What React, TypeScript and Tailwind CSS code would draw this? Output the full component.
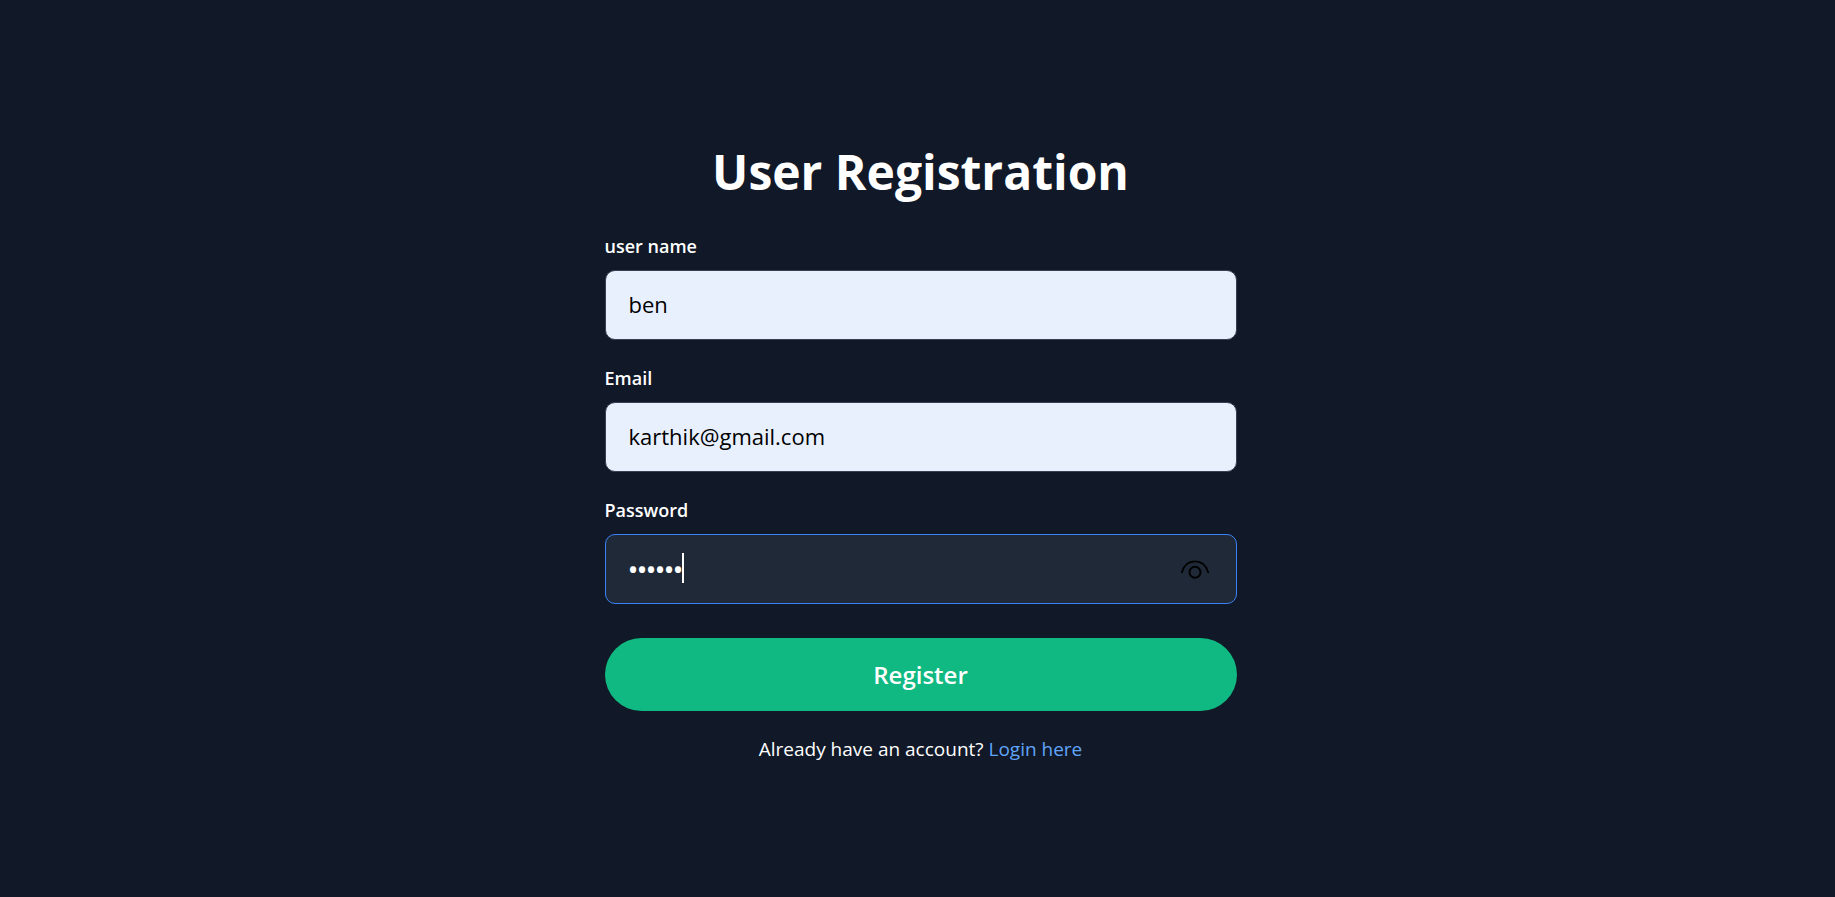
import { useState } from "react";

const inputClass =
  "h-[70px] w-full rounded-[10px] border border-gray-700 bg-[#e8f0fe] px-[23px] pb-0.5 text-[22px] text-black outline-none";
const labelClass = "mb-[9px] block text-lg leading-[30px] font-semibold text-white";

export default function App() {
  const [name, setName] = useState("ben");
  const [email, setEmail] = useState("karthik@gmail.com");
  const [password, setPassword] = useState("123456");
  const [visible, setVisible] = useState(false);

  return (
    <main className="flex min-h-screen flex-col items-center bg-[#111827] px-4 pt-[140px] pl-[22px] font-['Open_Sans',sans-serif] text-white">
      <div className="w-full max-w-[632px]">
        <h1 className="mb-[27px] text-center text-5xl leading-[64px] font-bold">
          User Registration
        </h1>
        <form onSubmit={(e) => e.preventDefault()}>
          <div className="mb-[23px]">
            <label htmlFor="name" className={labelClass}>
              user name
            </label>
            <input id="name" type="text" className={inputClass} value={name} onChange={(e) => setName(e.target.value)} />
          </div>
          <div className="mb-[23px]">
            <label htmlFor="email" className={labelClass}>
              Email
            </label>
            <input id="email" type="email" className={inputClass} value={email} onChange={(e) => setEmail(e.target.value)} />
          </div>
          <div>
            <label htmlFor="password" className={labelClass}>
              Password
            </label>
            <div className="relative">
              <input
                id="password"
                type={visible ? "text" : "password"}
                className="h-[70px] w-full rounded-[10px] border border-[#3b82f6] bg-[#1f2937] px-[23px] pb-0.5 font-['Noto_Sans',sans-serif] text-2xl font-semibold text-white caret-transparent outline-none"
                value={password}
                onChange={(e) => setPassword(e.target.value)}
              />
              <span aria-hidden="true" className="pointer-events-none absolute top-[19px] left-[77px] h-[30px] w-[2px] bg-white" />
              <button
                type="button"
                aria-label="Show password"
                className="absolute inset-y-0 right-[27px] flex items-center pt-0.5"
                onClick={() => setVisible(!visible)}
              >
                <svg width="30" height="30" viewBox="0 0 30 30" fill="none" stroke="#000" strokeWidth="1.9" strokeLinecap="round">
                  <path d="M1.9 17.3C4 9.8 9 6.4 15 6.4S26 9.8 28.1 17.3" />
                  <circle cx="15" cy="17.2" r="5.5" />
                </svg>
              </button>
            </div>
          </div>
          <button type="submit" className="mt-[34px] h-[73px] w-full rounded-full bg-[#10b981] text-2xl font-semibold text-white">
            Register
          </button>
        </form>
        <p className="mt-[23px] text-center text-[19px] leading-[30px]">
          Already have an account?{" "}
          <a href="#login" className="text-[#60a5fa]">
            Login here
          </a>
        </p>
      </div>
    </main>
  );
}
